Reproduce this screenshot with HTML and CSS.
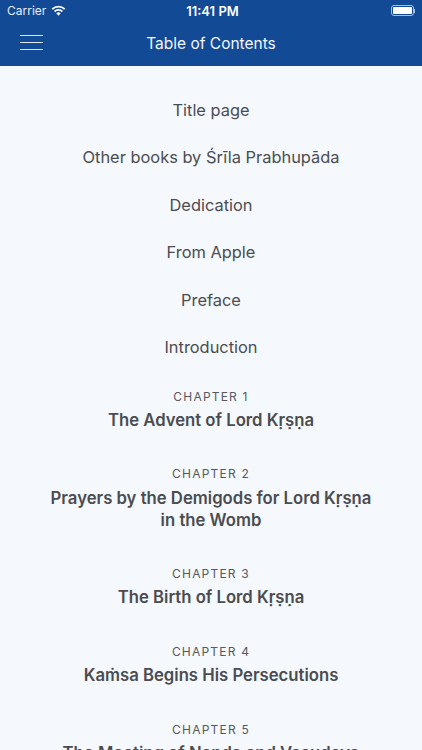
FILE: index.html
```html
<!DOCTYPE html>
<html lang="en">
<head>
<meta charset="utf-8">
<title>Table of Contents</title>
<link rel="stylesheet" href="styles.css">
</head>
<body>
<div class="screen">
  <header class="header">
    <div class="status">
      <div class="status-left">
        <span>Carrier</span>
        <svg class="wifi" viewBox="0 0 16 12" width="15" height="11"><path d="M8 11.6 5.6 9a3.4 3.4 0 0 1 4.8 0zM4.4 7.8 3.1 6.4a7 7 0 0 1 9.8 0l-1.3 1.4a5.2 5.2 0 0 0-7.2 0zM1.9 5.2.5 3.8a10.6 10.6 0 0 1 15 0l-1.4 1.4a8.6 8.6 0 0 0-12.2 0z" fill="#fff"/></svg>
      </div>
      <div class="clock">11:41 PM</div>
      <div class="status-right">
        <div class="battery"><div class="battery-fill"></div></div>
        <div class="battery-cap"></div>
      </div>
    </div>
    <div class="nav">
      <div class="burger"><i></i><i></i><i></i></div>
      <div class="nav-title">Table of Contents</div>
    </div>
  </header>
  <main class="toc">
    <a class="item">Title page</a>
    <a class="item">Other books by Śrīla Prabhupāda</a>
    <a class="item">Dedication</a>
    <a class="item">From Apple</a>
    <a class="item">Preface</a>
    <a class="item">Introduction</a>
    <section class="chapter first"><div class="label">CHAPTER 1</div><div class="name">The Advent of Lord Kṛṣṇa</div></section>
    <section class="chapter"><div class="label">CHAPTER 2</div><div class="name">Prayers by the Demigods for Lord Kṛṣṇa in the Womb</div></section>
    <section class="chapter"><div class="label">CHAPTER 3</div><div class="name">The Birth of Lord Kṛṣṇa</div></section>
    <section class="chapter"><div class="label">CHAPTER 4</div><div class="name">Kaṁsa Begins His Persecutions</div></section>
    <section class="chapter"><div class="label">CHAPTER 5</div><div class="name">The Meeting of Nanda and Vasudeva</div></section>
  </main>
</div>
</body>
</html>
```
FILE: styles.css
```css
html, body {
  margin: 0;
  padding: 0;
}
body {
  font-family: Inter, "Noto Sans", sans-serif;
  background: #f5f8fd;
}
.screen {
  width: 422px;
  height: 750px;
  overflow: hidden;
  background: #f5f8fd;
}
.header {
  height: 66px;
  background: #124a96;
  color: #fff;
  display: flex;
  flex-direction: column;
}
.status {
  height: 21px;
  padding: 0 4px 0 7px;
  display: grid;
  grid-template-columns: 1fr auto 1fr;
  align-items: center;
  font-size: 12px;
}
.status-left {
  display: flex;
  align-items: center;
  gap: 5px;
  color: #e6edf6;
}
.wifi {
  display: block;
}
.clock {
  font-weight: 600;
  font-size: 13px;
}
.status-right {
  display: flex;
  justify-content: flex-end;
  align-items: center;
  padding-right: 3px;
}
.battery {
  width: 23px;
  height: 11px;
  box-sizing: border-box;
  border: 1px solid #a9bfdc;
  border-radius: 3px;
  padding: 1px;
}
.battery-fill {
  height: 100%;
  background: #fff;
  border-radius: 1px;
}
.battery-cap {
  width: 1px;
  height: 4px;
  background: #a9bfdc;
}
.nav {
  flex: 1;
  display: flex;
  align-items: center;
  justify-content: center;
  position: relative;
  padding-bottom: 1px;
}
.burger {
  position: absolute;
  left: 20px;
  top: 14px;
  width: 23px;
  display: flex;
  flex-direction: column;
  gap: 6px;
}
.burger i {
  display: block;
  height: 1px;
  background: #dfe8f3;
}
.nav-title {
  font-size: 15.5px;
  color: #f4f7fb;
}
.toc {
  display: flex;
  flex-direction: column;
  align-items: center;
  text-align: center;
  padding: 31.5px 40px 0;
  color: #4a4c50;
}
.item {
  font-size: 16.4px;
  line-height: 24px;
  height: 24px;
  margin-bottom: 23.5px;
  white-space: nowrap;
}
.chapter {
  padding-top: 35.4px;
  width: 330px;
}
.chapter.first {
  padding-top: 0;
  margin-top: 6px;
}
.label {
  font-size: 12px;
  letter-spacing: 1.2px;
  line-height: 16px;
  color: #56585c;
}
.name {
  font-size: 16.7px;
  font-weight: 600;
  line-height: 22px;
  margin-top: 4.4px;
  color: #4a4c50;
}
```
